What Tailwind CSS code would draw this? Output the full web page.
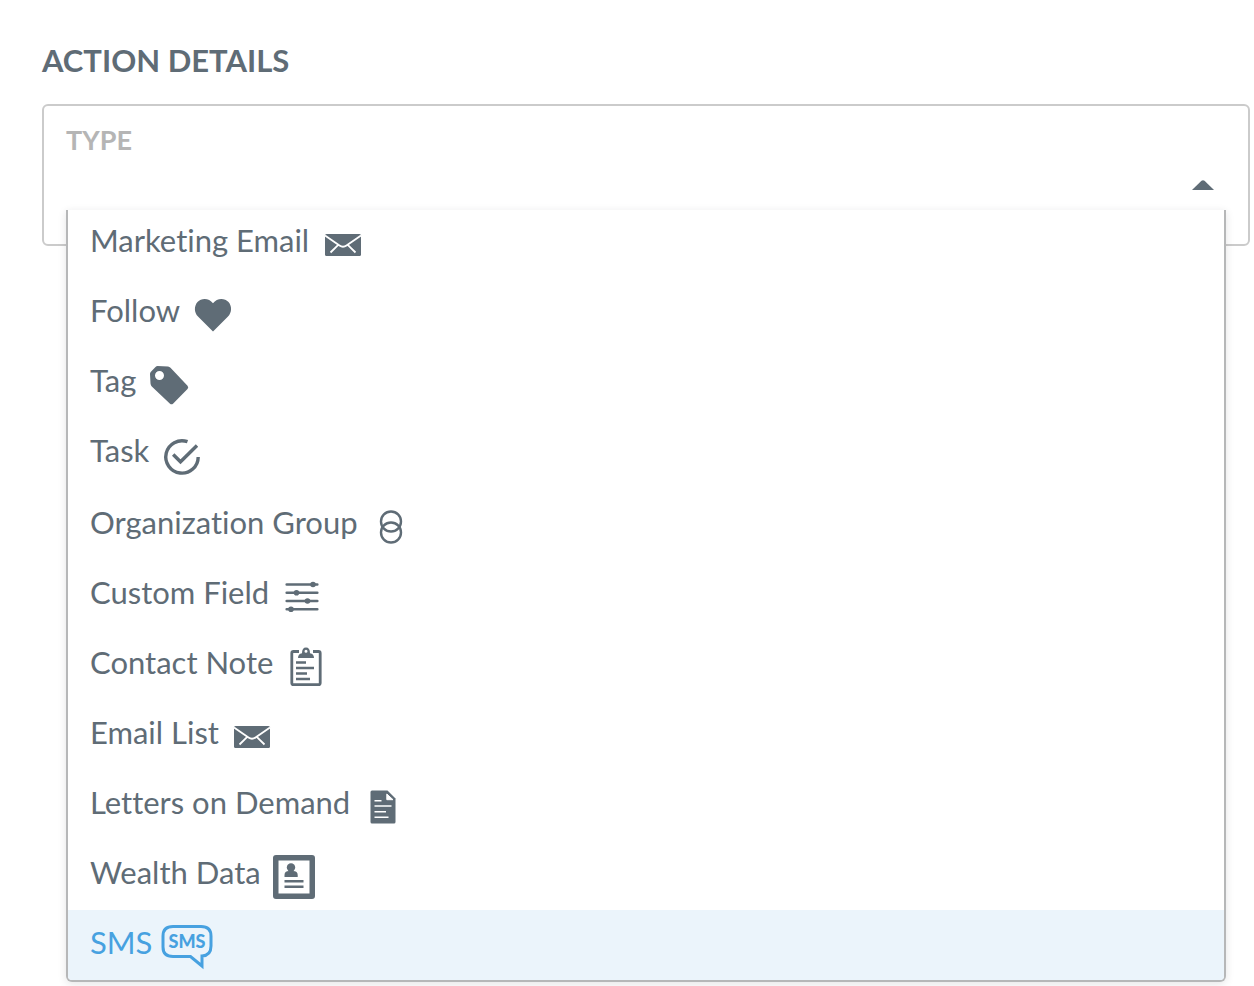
<!DOCTYPE html>
<html lang="en">
<head>
<meta charset="utf-8">
<title>Action Details</title>
<meta name="viewport" content="width=device-width, initial-scale=1">
<script src="https://cdn.jsdelivr.net/npm/@tailwindcss/browser@4"></script>
</head>
<body class="bg-white font-['Lato',sans-serif] text-[#5f6c76] [font-variant-ligatures:none]">
<svg class="hidden" aria-hidden="true">
  <symbol id="mail" viewBox="-26 -24 52 48">
    <rect x="-18" y="-11" width="36" height="22" rx="1.5" fill="currentColor"/>
    <path d="M-18 -9.500 L-3.500 .5 Q0 3 3.500 .5 L18 -9.500 M-12.500 7.500 L-5 .2 M12.500 7.500 L5 .2" fill="none" stroke="#fff" stroke-width="1.800"/>
  </symbol>
</svg>
<main class="min-h-screen pt-10 pl-[42px] pr-1">
  <h1 id="title" class="text-[31px] leading-10 font-bold">ACTION DETAILS</h1>
  <section class="relative mt-6 h-[142px] rounded-md border-2 border-[#cbcbcb] px-[22px] pt-4" aria-labelledby="title">
    <div class="flex flex-col">
      <span id="type-label" class="text-[27px] leading-9 font-bold text-[#b5b5b5]">TYPE</span>
      <button type="button" aria-labelledby="type-label" aria-expanded="true" aria-controls="type-menu" class="flex h-[54px] w-full items-center justify-end pr-3">
        <svg class="h-2.5 w-[22px]" viewBox="0 0 22 10" fill="currentColor"><path d="M0 10 L9.500 .8 Q11 -.5 12.500 .8 L22 10Z"/></svg>
      </button>
    </div>
    <ul id="type-menu" role="listbox" aria-labelledby="type-label" class="absolute inset-x-[22px] top-[104px] overflow-hidden rounded-b-md border-2 border-t-0 border-[#b6b7b8] bg-white text-[31px] leading-10 shadow-[0_2px_8px_rgba(34,36,38,0.12)]">
      <li role="option"><button type="button" class="flex h-[68px] w-full items-center gap-2 pl-[22px] pb-1"><span class="pb-1">Marketing Email</span><svg class="mt-1.5 h-12 w-[52px]"><use href="#mail"/></svg></button></li>
      <li role="option"><button type="button" class="flex h-[70px] w-full items-center gap-[7px] pl-[22px] pb-0.5"><span class="pb-1">Follow</span>
        <svg class="mt-1.5 h-12 w-[52px]" viewBox="-26 -24 52 48" fill="currentColor"><path d="M0 16.500 L-15 1.500 C-19 -2.500 -19 -9 -15.500 -13 C-11.500 -17.200 -4 -17.200 0 -11.700 C4 -17.200 11.500 -17.200 15.500 -13 C19 -9 19 -2.500 15 1.500Z"/></svg></button></li>
      <li role="option"><button type="button" class="flex h-[70px] w-full items-center gap-[7px] pl-[22px] pb-0.5"><span class="pb-1">Tag</span>
        <svg class="mt-1.5 h-12 w-[52px]" viewBox="-26 -24 52 48" fill="currentColor" fill-rule="evenodd"><path d="M-11.500 -19 L-1 -18.500 Q.5 -18.200 1.500 -17.300 L18.500 .8 Q20 2.500 18.500 4 L4 18.700 Q2.500 20 1 18.700 L-17.200 1.500 Q-18.300 .3 -18.500 -1.500 L-19 -11 Q-19 -12 -18.300 -13 L-13.500 -18 Q-12.500 -19 -11.500 -19Z M-9.500 -14 A4.500 4.500 0 1 0 -9.500 -5 A4.500 4.500 0 1 0 -9.500 -14Z"/></svg></button></li>
      <li role="option"><button type="button" class="flex h-[72px] w-full items-center gap-[7px] pl-[22px] pb-0.5"><span class="pb-1.5">Task</span>
        <svg class="mt-2 h-12 w-[52px]" viewBox="-26 -24 52 48" fill="none" stroke="currentColor" stroke-width="3.400"><path d="M5.500 -15.300 A16.200 16.200 0 1 0 16.200 0 M-8.800 -2.500 L-1.500 4.800 L15 -11.500"/></svg></button></li>
      <li role="option"><button type="button" class="flex h-[70px] w-full items-center gap-[7px] pl-[22px] pb-0.5"><span class="pb-1">Organization Group</span>
        <svg class="mt-1.5 h-12 w-[52px]" viewBox="-26 -24 52 48" fill="none" stroke="currentColor" stroke-width="2.400"><circle cy="-5.500" r="10"/><circle cy="5.500" r="10"/></svg></button></li>
      <li role="option"><button type="button" class="flex h-[70px] w-full items-center gap-[7px] pl-[22px] pb-0.5"><span class="pb-1">Custom Field</span>
        <svg class="mt-1.5 h-12 w-[52px]" viewBox="-26 -24 52 48" fill="currentColor" stroke="currentColor" stroke-width="2.600" stroke-linecap="round"><path d="M-15.300 -12.500H15.300M-15.300 -4.300H15.300M-15.300 4H15.300M-15.300 12.300H15.300"/><g stroke="none"><circle cx="11" cy="-12.500" r="2.800"/><circle cx="-5.500" cy="-4.300" r="2.800"/><circle cx="5.500" cy="4" r="2.800"/><circle cx="-11" cy="12.300" r="2.800"/></g></svg></button></li>
      <li role="option"><button type="button" class="flex h-[70px] w-full items-center gap-[7px] pl-[22px] pb-0.5"><span class="pb-1">Contact Note</span>
        <svg class="mt-1.5 h-12 w-[52px]" viewBox="-26 -24 52 48" fill="none" stroke="currentColor" stroke-width="2.800"><path d="M-7 -15.500H-12.500Q-14.200 -15.500 -14.200 -13.800V16Q-14.200 17.700 -12.500 17.700H12.500Q14.200 17.700 14.200 16V-13.800Q14.200 -15.500 12.500 -15.500H7"/><path d="M-10 -4.500H0M-10 1H8M-10 6.500H1M-10 12H4" stroke-width="2.500"/><path d="M-8 -9 Q-8 -13 -4 -13.800 Q-4 -19.500 0 -19.500 Q4 -19.500 4 -13.800 Q8 -13 8 -9Z M0 -17.300 A1.500 1.500 0 1 0 0 -14.300 A1.500 1.500 0 1 0 0 -17.300Z" fill="currentColor" fill-rule="evenodd" stroke="none"/></svg></button></li>
      <li role="option"><button type="button" class="flex h-[70px] w-full items-center gap-[7px] pl-[22px] pb-0.5"><span class="pb-1">Email List</span><svg class="mt-1.5 h-12 w-[52px]"><use href="#mail"/></svg></button></li>
      <li role="option"><button type="button" class="flex h-[70px] w-full items-center gap-[7px] pl-[22px] pb-0.5"><span class="pb-1">Letters on Demand</span>
        <svg class="mt-1.5 h-12 w-[52px]" viewBox="-26 -24 52 48"><path d="M-11 -16.500H4.500L12.500 -8.500V15Q12.500 16.500 11 16.500H-11Q-12.500 16.500 -12.500 15V-15Q-12.500 -16.500 -11 -16.500Z" fill="currentColor"/><path d="M3.800 -13V-7.300H10Z" fill="#fff" stroke="#fff" stroke-width="1"/><path d="M-8.500 -6.300H-1.500M-8.500 -1H8.500M-8.500 4.800H3M-8.500 10.300H5.500" fill="none" stroke="#fff" stroke-width="1.600"/></svg></button></li>
      <li role="option"><button type="button" class="flex h-[70px] w-full items-center gap-[7px] pl-[22px] pb-0.5"><span class="pb-1">Wealth Data</span>
        <svg class="mt-1.5 h-12 w-[52px]" viewBox="-26 -24 52 48" fill="currentColor"><path d="M-18 -22H18Q21 -22 21 -19V19Q21 22 18 22H-18Q-21 22 -21 19V-19Q-21 -22 -18 -22ZM-15.500 -16.500V16.500H15.500V-16.500Z" fill-rule="evenodd"/><circle cx="-3" cy="-9.500" r="4.200"/><path d="M-9.500 0V-2Q-9.500 -6 -5 -6H-1Q3.700 -6 3.700 -2V0ZM-9.500 3H9.500V5.500H-9.500ZM-9.500 8.500H9.500V11H-9.500Z"/></svg></button></li>
      <li role="option" aria-selected="true"><button type="button" class="flex h-[70px] w-full items-center gap-[7px] bg-[#ebf4fb] pl-[22px] pb-0.5 text-[#47a1e0]"><span class="pb-1">SMS</span>
        <svg class="mt-1.5 h-12 w-[54px]" viewBox="-28 -24 54 48"><path d="M-14 -20.500H14Q24 -20.500 24 -11V-1Q24 8.500 15 9V19L3.500 9.500H-14Q-24 9.500 -24 0V-11Q-24 -20.500 -14 -20.500Z" fill="none" stroke="currentColor" stroke-width="3"/><text x="0" y="1" text-anchor="middle" fill="currentColor" class="text-[18px] font-black">SMS</text></svg></button></li>
    </ul>
  </section>
</main>
</body>
</html>
